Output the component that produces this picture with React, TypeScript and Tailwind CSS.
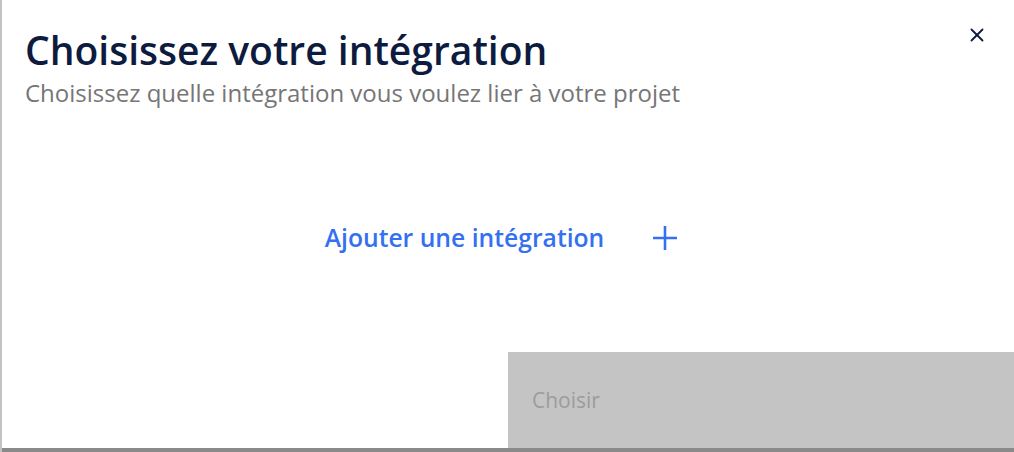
import { X } from "lucide-react";

export default function App() {
  return (
    <div
      className="relative flex h-[452px] w-[1014px] flex-col overflow-hidden bg-white border-l-2 border-[#c2c2c2]"
      style={{ fontFamily: '"Open Sans", "Noto Sans", sans-serif' }}
    >
      {/* Close button */}
      <button className="absolute right-[26px] top-[24px] text-[#0d1b3e]" aria-label="Fermer">
        <X size={22} strokeWidth={2} />
      </button>

      {/* Header */}
      <header className="pl-[23px] pt-[24px]">
        <h1 className="text-[39px] font-semibold leading-[52px] text-[#0d1b3e]">
          Choisissez votre intégration
        </h1>
        <p className="text-[24px] leading-[34px] text-[#767676]">
          Choisissez quelle intégration vous voulez lier à votre projet
        </p>
      </header>

      {/* Body */}
      <main className="flex flex-1 items-start justify-center pt-[112px]">
        <button className="mr-[14px] flex items-center gap-[49px] text-[#3470f0]">
          <span className="text-[24.7px] font-semibold leading-[32px]">Ajouter une intégration</span>
          <svg width="24" height="24" viewBox="0 0 24 24" fill="none" stroke="currentColor" strokeWidth="2.6">
            <path d="M12 0v24M0 12h24" />
          </svg>
        </button>
      </main>

      {/* Footer */}
      <footer className="flex h-[100px] flex-col">
        <div className="flex flex-1 justify-end">
          <button
            disabled
            className="flex w-[506px] items-center bg-[#c4c4c4] pl-[24px] pt-[2px] text-[21px] text-[#9c9c9c]"
          >
            Choisir
          </button>
        </div>
        <div className="h-[4px] bg-[#8a8a8a]" />
      </footer>
    </div>
  );
}
